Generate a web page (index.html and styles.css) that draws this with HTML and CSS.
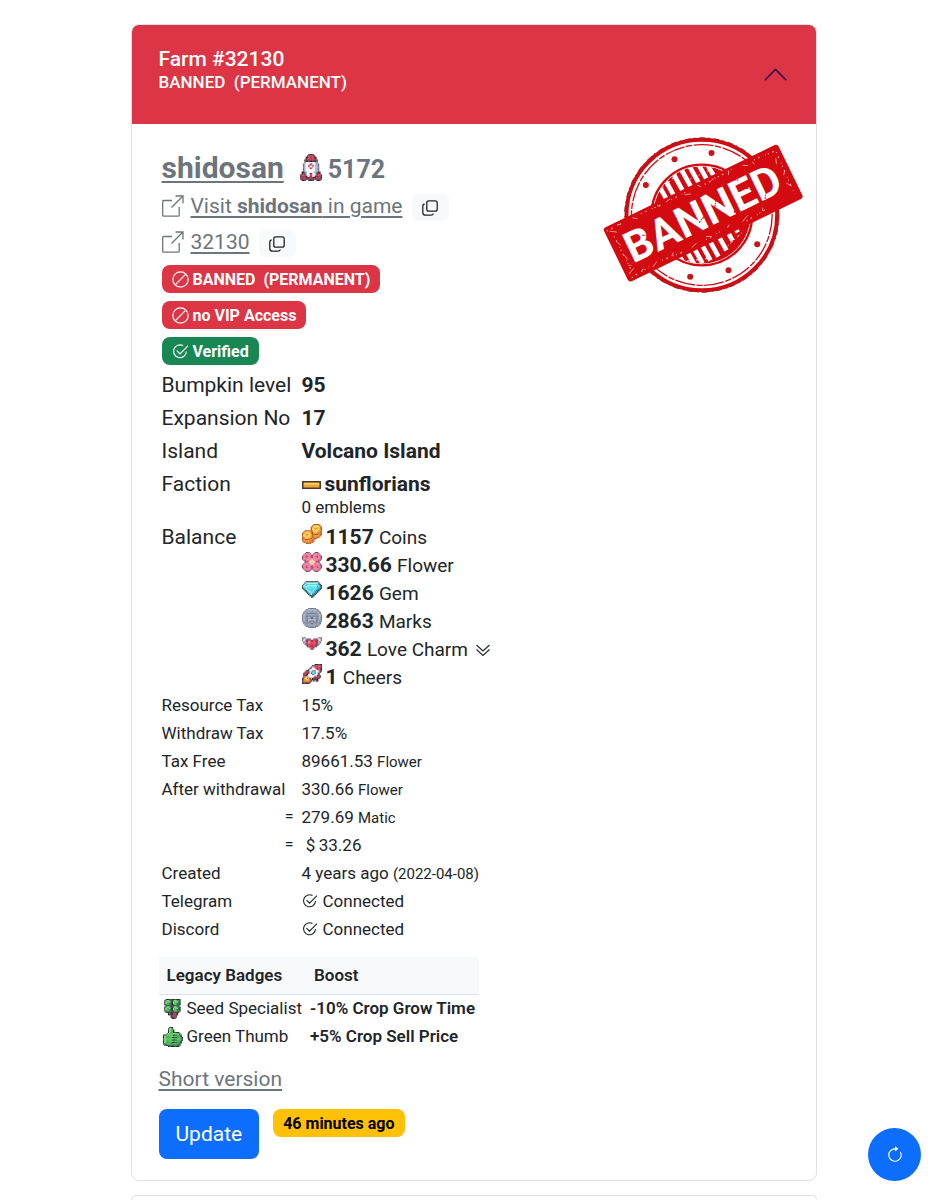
FILE: index.html
```html
<!DOCTYPE html>
<html lang="en">
<head>
<meta charset="utf-8">
<meta name="viewport" content="width=device-width, initial-scale=1">
<title>Farm #32130</title>
<link rel="stylesheet" href="styles.css">
</head>
<body>
<svg class="defs" aria-hidden="true">
  <symbol id="open" viewBox="0 0 22 22"><path d="M10 5.500H1.500Q.7 5.500.7 6.500V20Q.7 21.200 1.800 21.200H16Q17.200 21.200 17.200 20V12M9.500 12.500 21 1M13.500 1H21V8.500" fill="none" stroke="currentColor" stroke-width="1.300"/></symbol>
  <symbol id="copy" viewBox="0 0 16 16"><path d="M6.800.8H13.200Q15.200.8 15.200 2.800V9.200Q15.200 11.200 13.200 11.200H6.800Q4.800 11.200 4.800 9.200V2.800Q4.800.8 6.800.8M2.600 4Q.8 4.300.8 6V12.500Q.8 15.200 3.500 15.200H9Q11 15.200 11.300 13.500" fill="none" stroke="currentColor" stroke-width="1.300"/></symbol>
  <symbol id="ban" viewBox="0 0 17 17"><g fill="none" stroke="currentColor" stroke-width="1.200"><circle cx="8.500" cy="8.500" r="7.700"/><path d="M3.200 13.800 13.800 3.200"/></g></symbol>
  <symbol id="check" viewBox="0 0 16 16"><path d="M10.500 2.600A6 6 0 1 0 13.500 8M4.500 7.200 7.500 10.200 15 2.700" fill="none" stroke="currentColor" stroke-width="1.100"/></symbol>
</svg>
<main class="page">
  <article class="card">
    <button class="card-head" type="button" aria-expanded="true">
      <span class="head-text"><span class="head-title">Farm #32130</span><span class="head-sub">BANNED&nbsp; (PERMANENT)</span></span>
      <svg class="chevron" viewBox="0 0 16 16"><path d="m2 11 6-6 6 6" fill="none" stroke="#3f1250" stroke-linecap="round" stroke-linejoin="round"/></svg>
    </button>
    <div class="card-body">
      <div class="top">
        <div class="identity">
          <h2 class="name"><a href="#">shidosan</a><svg class="rocket" data-sprite="rocket"></svg><span class="score">5172</span></h2>
          <div class="line"><svg class="ext"><use href="#open"/></svg><a href="#">Visit <b>shidosan</b> in game</a><button class="copy" type="button" aria-label="Copy name"><svg><use href="#copy"/></svg></button></div>
          <div class="line"><svg class="ext"><use href="#open"/></svg><a href="#">32130</a><button class="copy" type="button" aria-label="Copy farm number"><svg><use href="#copy"/></svg></button></div>
          <div class="badges">
            <span class="badge red"><svg><use href="#ban"/></svg>BANNED&nbsp; (PERMANENT)</span>
            <span class="badge red"><svg><use href="#ban"/></svg>no VIP Access</span>
            <span class="badge green"><svg><use href="#check"/></svg>Verified</span>
          </div>
        </div>
        <svg class="stamp" viewBox="38 36 602 468" role="img" aria-label="Banned">
          <defs><clipPath id="core"><circle cx="334" cy="270" r="146"/></clipPath></defs>
          <g fill="none" stroke="#d30a10">
            <circle cx="334" cy="270" r="226" stroke-width="12"/>
            <circle cx="334" cy="270" r="230" stroke-width="6" stroke="#a92020" stroke-dasharray="17 9 4 13"/>
            <circle cx="334" cy="270" r="211" stroke-width="4" stroke-dasharray="60 4 19 5"/>
            <circle cx="334" cy="270" r="151" stroke-width="7"/>
          </g>
          <g clip-path="url(#core)">
            <circle cx="334" cy="270" r="146" fill="#d30a10"/>
            <path d="m202 176 28 50m-8-65 36 65m-13-86 36 65m-11-76 36 65m-9-70 36 65m-8-69 36 65m-8-61 30 50M255 372l34 60m-11-74 36 65m-14-73 36 65m-12-74 36 65m-12-76 36 65m-12-84 36 65m-12-84 30 55m-10-70 26 45" stroke="#fff" stroke-width="14" fill="none"/>
            <path d="m205 200 55-52m25 20 80-35m-75 275 80-10m30-25 60-55" stroke="#fff" stroke-width="3" stroke-dasharray="9 7 3 8"/>
          </g>
          <g fill="#c9151a"><circle cx="363" cy="84" r="9"/><circle cx="252" cy="103" r="9"/><circle cx="166" cy="180" r="9"/><circle cx="500" cy="358" r="9"/><circle cx="414" cy="436" r="9"/><circle cx="299" cy="455" r="9"/></g>
          <g transform="rotate(-25.900 339 264)">
            <rect x="47" y="174" width="582" height="180" rx="9" fill="#d30a10"/>
            <path d="m62 190 18 12m12-20 9 5m40-3 12 9m71-11 5 7m24-4 14-3m45 8 18 6m29-15 8 9m32-2 17-5m40 11 6-10m45 3 14 7m16-4 4 9M58 331l20-9m16 19 9-6m29 8 17-9m48 5 8-8m57 11 19-6m34-6 11 7m59-2 8-6m40 9 23-10m45 8 5-9M68 230l5 13m-3 30 4 19m-6 15 8 4M606 210l-6 18m14 27-9 12m-3 25 10 15" stroke="#ffc9c9" stroke-width="2" fill="none"/>
            <path d="m55 186 55-2m-49 160 60-6m48-154 70 2m30 0 50-2m61 4 95-5m70 4 70 3M165 337l70 6m76-4 54-3m80 6 65-6M67 210l2 115M615 195l-5 135" stroke="#ffdede" stroke-width="3" stroke-dasharray="3 11 5 17 2 7" fill="none"/>
            <text class="stamp-text" x="336" y="309" text-anchor="middle">BANNED</text>
            <path d="m145 243 24 20m90-22-13 29m68 14 28-12m48-28-16 24m48 36 20-22m44-28 22 14m29 20-14 19M223 210l15 28m131-33-17 13m106-8 18 11" stroke="#d30a10" stroke-width="3" stroke-dasharray="7 3 4 2" fill="none"/>
          </g>
        </svg>
      </div>

      <table class="info">
        <tr><th scope="row">Bumpkin level</th><td><b>95</b></td></tr>
        <tr><th scope="row">Expansion No</th><td><b>17</b></td></tr>
        <tr><th scope="row">Island</th><td><b>Volcano Island</b></td></tr>
        <tr><th scope="row">Faction</th><td><svg class="bar" viewBox="0 0 19 8"><path d="M0 0H19V8H0Z" fill="#4b3a32"/><path d="M1.500 1.500H17.500V6.500H1.500Z" fill="#f0a92c"/><path d="M2 2H17V3.500H2Z" fill="#ffd36a"/></svg><b>sunflorians</b><div class="emblems">0 emblems</div></td></tr>
        <tr class="balance"><th scope="row">Balance</th><td>
          <ul class="coins">
            <li><svg data-sprite="coins"></svg><b>1157</b> <span>Coins</span></li>
            <li><svg data-sprite="flower"></svg><b>330.66</b> <span>Flower</span></li>
            <li><svg data-sprite="gem"></svg><b>1626</b> <span>Gem</span></li>
            <li><svg data-sprite="mark"></svg><b>2863</b> <span>Marks</span></li>
            <li><svg data-sprite="heart"></svg><b>362</b> <span>Love Charm</span> <svg class="more" viewBox="0 0 16 16"><path d="m1.500 3 6.500 6 6.500-6m-13 4.500 6.500 6 6.500-6" fill="none" stroke="currentColor" stroke-width="1.100"/></svg></li>
            <li><svg data-sprite="cheer"></svg><b>1</b> <span>Cheers</span></li>
          </ul></td></tr>
        <tr class="sm"><th scope="row">Resource Tax</th><td>15%</td></tr>
        <tr class="sm"><th scope="row">Withdraw Tax</th><td>17.5%</td></tr>
        <tr class="sm"><th scope="row">Tax Free</th><td>89661.53 <small>Flower</small></td></tr>
        <tr class="sm"><th scope="row">After withdrawal</th><td>330.66 <small>Flower</small></td></tr>
        <tr class="sm"><th scope="row" class="eq">=</th><td>279.69 <small>Matic</small></td></tr>
        <tr class="sm"><th scope="row" class="eq">=</th><td>&nbsp;$&#8201;33.26</td></tr>
        <tr class="sm"><th scope="row">Created</th><td>4 years ago <small>(2022-04-08)</small></td></tr>
        <tr class="sm"><th scope="row">Telegram</th><td><svg class="tick"><use href="#check"/></svg>Connected</td></tr>
        <tr class="sm"><th scope="row">Discord</th><td><svg class="tick"><use href="#check"/></svg>Connected</td></tr>
      </table>

      <table class="legacy">
        <thead><tr><th scope="col">Legacy Badges</th><th scope="col">Boost</th></tr></thead>
        <tbody>
          <tr><td><svg data-sprite="clover"></svg>Seed Specialist</td><td><b>-10% Crop Grow Time</b></td></tr>
          <tr><td><svg data-sprite="thumb"></svg>Green Thumb</td><td><b>+5% Crop Sell Price</b></td></tr>
        </tbody>
      </table>

      <a class="short" href="#">Short version</a>
      <div class="actions"><button class="update" type="button">Update</button><span class="badge yellow">46 minutes ago</span></div>
    </div>
  </article>
  <div class="card next"></div>
</main>
<button class="fab" type="button" aria-label="Refresh"><svg viewBox="0 0 16 16"><path d="M8 3a5 5 0 1 0 4.546 2.914.500.500 0 0 1 .908-.417A6 6 0 1 1 8 2z"/><path d="M8 4.466V.534a.25.250 0 0 1 .410-.192l2.360 1.966c.12.100.12.284 0 .384L8.410 4.658A.25.250 0 0 1 8 4.466"/></svg></button>
<script src="sprites.js"></script>
</body>
</html>
```

FILE: styles.css
```css
* { box-sizing: border-box; }
body {
  margin: 0;
  background: #fff;
  color: #212529;
  font-family: Roboto, "Liberation Sans", sans-serif;
  font-size: 21px;
  line-height: 25px;
}
.defs { position: absolute; width: 0; height: 0; }
.page { max-width: 686px; margin: 0 auto; padding-top: 24px; }
button { font-family: inherit; border: 0; cursor: pointer; }
a { color: #6c757d; text-underline-offset: 3px; text-decoration-thickness: 2px; }
b { font-weight: 700; }
.card { border: 1px solid #dee2e6; border-radius: 8px; overflow: hidden; }
.card-head {
  display: flex;
  align-items: center;
  justify-content: space-between;
  width: 100%;
  height: 99px;
  padding: 0 27px 10px 27px;
  background: #dc3545;
  color: #fff;
  text-align: left;
}
.head-text { display: flex; flex-direction: column; font-weight: 500; }
.head-title { font-size: 21px; line-height: 24px; }
.head-sub { font-size: 17px; line-height: 22px; }
.chevron { width: 27px; height: 27px; margin-top: 9px; }
.card-body { padding: 15px 12px 21px 27px; }
.top { display: flex; justify-content: space-between; align-items: flex-start; }
.identity { padding-left: 3px; }
.name { display: flex; align-items: center; height: 49px; margin: 0; padding-top: 8px; font-size: 30px; color: #6c757d; }
.rocket { width: 22px; height: 27px; margin: 0 6px 0 16px; }
.score { font-size: 25px; padding-top: 3px; }
.line { display: flex; align-items: center; height: 36px; color: #6c757d; }
.ext { width: 22px; height: 22px; margin-right: 7px; }
.copy { display: flex; align-items: center; justify-content: center; width: 37px; height: 27px; margin: 3px 0 0 9px; padding: 0; border-radius: 6px; background: #f8f9fa; color: #212529; }
.copy svg { width: 16px; height: 16px; }
.badges { display: flex; flex-direction: column; align-items: flex-start; gap: 8px; padding: 5px 0 4px; }
.badge { display: inline-flex; align-items: center; height: 28px; padding: 0 10px; border-radius: 8px; color: #fff; font-size: 16px; font-weight: 700; white-space: nowrap; }
.badge svg { width: 17px; height: 17px; margin-right: 4px; }
.red { background: #dc3545; }
.green { background: #198754; }
.yellow { background: #ffc107; color: #000; }
.stamp { width: 201px; height: 156px; flex: none; margin-top: -2px; }
.stamp-text { font: 700 129px Roboto, sans-serif; fill: #fff; }

.info { border-collapse: collapse; }
.info th { width: 139px; padding: 4px 0 4px 3px; font-weight: 400; text-align: left; vertical-align: top; white-space: nowrap; }
.info td { padding: 4px; }
.info .balance td { padding: 2px 4px 0; }
.bar { width: 19px; height: 8px; margin-right: 4px; vertical-align: 2px; }
.emblems { font-size: 17px; line-height: 20px; }
.coins { margin: 0; padding: 0; list-style: none; line-height: 28px; }
.coins li { height: 28px; white-space: nowrap; }
.coins svg { width: 20px; height: 20px; margin-right: 4px; vertical-align: 0; }
.coins span { font-size: 19px; }
.coins .more { width: 16px; height: 16px; margin-left: 2px; vertical-align: -2px; }
.info .sm th, .info .sm td { height: 28px; padding-top: 2px; padding-bottom: 2px; font-size: 17px; line-height: 24px; }
.info .sm .eq { padding-right: 4px; text-align: right; font-size: 16px; }
.info small { font-size: 15px; line-height: 20px; }
.tick { width: 16px; height: 16px; margin-right: 5px; vertical-align: -2px; }

.legacy { margin-top: 14px; border-collapse: collapse; font-size: 17px; line-height: 24px; }
.legacy th { height: 37px; padding: 0 8px; background: #f8f9fa; border-bottom: 1px solid #dee2e6; font-weight: 600; text-align: left; }
.legacy td { height: 28px; padding: 0 4px; white-space: nowrap; }
.legacy td b { font-weight: 600; }
.legacy svg { width: 20px; height: 20px; margin-right: 4px; vertical-align: -5px; }
.short { display: table; margin-top: 17px; }
.actions { display: flex; align-items: flex-start; gap: 14px; margin-top: 17px; }
.update { height: 50px; padding: 0 17px; border-radius: 8px; background: #0d6efd; color: #fff; font-size: 21px; }
.next { height: 5px; margin-top: 14px; border-bottom: 0; border-radius: 8px 8px 0 0; }
.fab { position: fixed; right: 26px; bottom: 19px; display: flex; align-items: center; justify-content: center; width: 53px; height: 53px; padding: 0; border-radius: 50%; background: #0d6efd; color: #fff; }
.fab svg { width: 18px; height: 18px; fill: currentColor; }
```

FILE: sprites.js
```js
const palette = {
  k: '#3b2635', r: '#d62b43', d: '#8e2340', w: '#f4f5fa', g: '#a9b3c6', s: '#657184',
  o: '#f08a1c', y: '#ffcb42', a: '#b9561d', p: '#ee6f91', q: '#c24a70', v: '#86405f', c: '#45d9ea',
  b: '#1685a8', t: '#a8fff3', n: '#17362e', e: '#3bb84b', l: '#86e56b', f: '#267c3b', m: '#8691a8'
};

// Each character is one pixel; a dot is transparent.
const sprites = {
  rocket: [
    '......kkkk......', '.....kdrrdk.....', '....kdrrrrdk....', '....krrrrrdk....', '...kddddddddk...',
    '...skkkkkkkks...', '...swwwwwwwgs...', '..sgwwwrrwwggs..', '..sgwwrggrwggs..', '..sgwwrwwrwggs..',
    '..sgwwwrrwwggs..', '..sgwwwwwwwggs..', '..sgwwwwwwwggs..', '.kksgwwwwwggskk.', '.krkgwwddwwgkrk.',
    'krrkgwwrrwwgkrrk', 'krrdkgwrrwgkdrrk', 'krrddkkrrkkddrrk', 'kdddkdkddkdkdddk', '.kkk..kkkk..kkk.'
  ],
  coins: [
    '.........aaaaa..', '........aoyyyoa.', '.......aoyyyyyoa', '.......ayyooyyoa', '.......ayyoyyyoa',
    '..aaaaaaoyyyyooa', '.aoyyyoaaoyyooaa', 'aoyyyyyoaooooaoa', 'ayyooyyoaaaaaoaa', 'ayyoyyyoaoooooa.',
    'aoyyyyooaaooaa..', 'aaoyyooaoaaa....', 'aoaaaaaooa......', 'aoooooooaa......', '.aaoooaaa.......', '...aaaa.........'
  ],
  flower: [
    '...vvv....vvv...', '..vpppv..vpppv..', '.vpppppvvpppppv.', 'vppqqppqqppqqppv', 'vppqpppqqpppqppv', 'vpppppppppppppqv',
    '.vqpppqwwqpppqv.', '..vqqpwyywpqqv..', '..vpppwyywpppv..', '.vpppqpwwpqpppv.', 'vpppppppppppppqv', 'vppqpppqqpppqppv',
    'vppqqppqqqppqqpv', '.vpppppvvpppppv.', '..vpppv..vpppv..', '...vvv....vvv...'
  ],
  gem: [
    '................', '...nnnnnnnnnn...', '..nttttttttttn..', '.ntccccccccccbn.', 'ntccttttttttccbn', 'ntctccccccccbcbn', 'nbcccccccccccbbn',
    '.nbtccccccccbbn.', '..nbtccccccbbn..', '...nbtccccbbn...', '....nbtccbbn....', '.....nbtbbn.....', '......nbbn......',
    '.......nn.......', '................', '................'
  ],
  mark: [
    '.....ssssss.....', '...ssmggggmss...', '..smggmmmmggms..', '.smgmmmmmmmmgms.', '.sgmmssmmssmmgs.', 'sgmmmmmmmmmmmmgs',
    'sgmssssmmssssmgs', 'sgmmmgmssmgmmmgs', 'sgmmmmmssmmmmmgs', 'sgmssggggggssmms', 'smmmsgssssgsmmms', '.smmmssggssmmms.',
    '.smmmmmssmmmmms.', '..smmmmmmmmmms..', '...ssmmmmmmss...', '.....ssssss.....'
  ],
  heart: [
    '................', 'sss..........sss', 'sgwsvvv..vvvswgs', 'swgvrrrvvrrrvgws', '.sgvrpprrrrdvgs.', '.sgvrprrrrrdvgs.',
    '..svrrrrrrrdvs..', '...svrrrrrdvs...', '....svrrrdvs....', '......vrdv......', '.......vv.......', '................',
    '................', '................', '................', '................'
  ],
  cheer: [
    '..........kkkkkk', '........kkdrrrrk', '.......kggrrrrrk', '......kgwwgrrrrk', '.....kgwwwwgrrdk', '...kkkwwssswwgdk',
    '..krrkwsccswwgk.', '.krrdkwsccswgk..', '.krdkwwwsswwgk..', '.kkkowwwwwggkkk.', '.koyogwwwgkrrdk.', 'kayyookgkkkrdk..',
    'kaoyyoaakkkdk...', 'kaooooak.k.kk...', 'kaaaaak.........', 'kkkkkk..........'
  ],
  clover: [
    '..nnnnnnnnnnnn..', '.nfllfnnfllffn..', '.nleelnnleelfn..', '.nleefnnleeffn..', '.nfeefnnfeeffn..', '..nnnnnnnnnnn...',
    '.nfllfnnfllffn..', '.nleelnnleelfn..', '.nleefnnleeffn..', '.nfeefnnfeeffn..', '..nnnnnkkkkkn...', '....nfnkaddk....',
    '....nnkkaddk....', '......kdddk.....', '......kkddk.....', '.......kkk......'
  ],
  thumb: [
    '.....nnn........', '....nlln........', '....nleen.......', '....nleen.......', '....nleennnnn...', '...nleeellleen..',
    'nnnleeeennneefn.', 'nleeeeeleeeeefn.', 'nleeeeennnneeefn', 'nleeeeeleeeeeefn', 'nleeeeennnneeefn', 'nleeeeeleeeeefn.',
    'nleeefennnneefn.', 'nffeeeffeeeffn..', '.nnnfffffffffn..', '....nnnnnnnnn...'
  ]
};

document.querySelectorAll('[data-sprite]').forEach((svg) => {
  const rows = sprites[svg.dataset.sprite];
  svg.setAttribute('viewBox', `0 0 16 ${rows.length}`);
  rows.forEach((row, y) => {
    [...row].forEach((key, x) => {
      if (key === '.') return;
      const pixel = document.createElementNS('http://www.w3.org/2000/svg', 'rect');
      pixel.setAttribute('x', x);
      pixel.setAttribute('y', y);
      pixel.setAttribute('width', 1.1);
      pixel.setAttribute('height', 1.1);
      pixel.setAttribute('fill', palette[key]);
      svg.appendChild(pixel);
    });
  });
});
```
